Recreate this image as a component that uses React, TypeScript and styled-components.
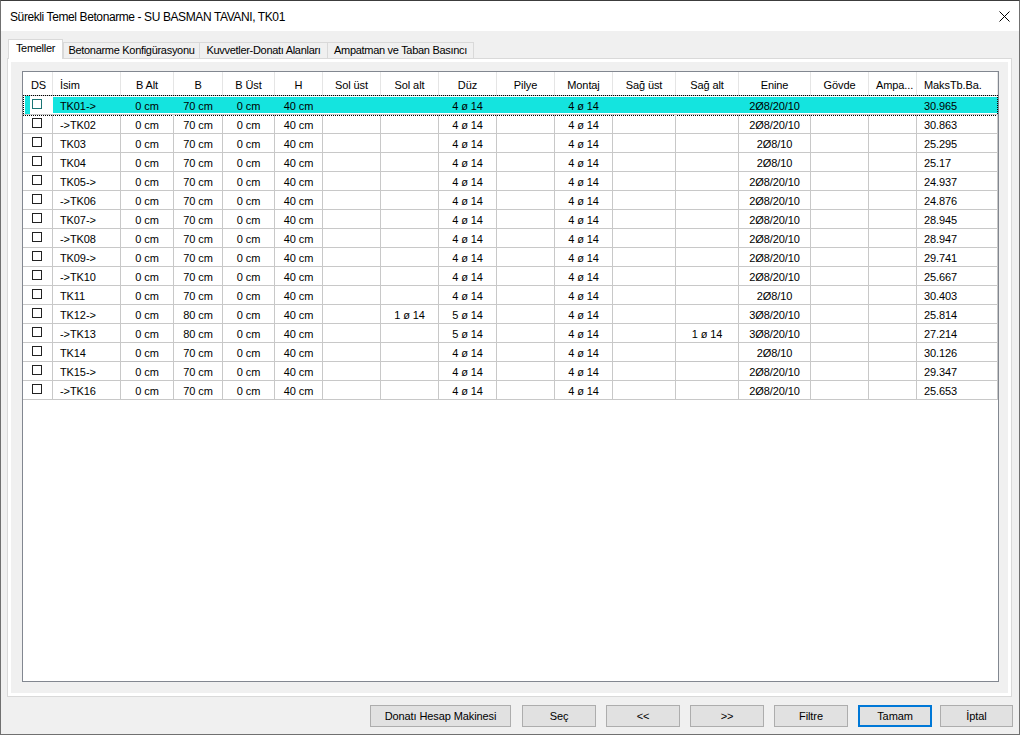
import React from 'react';
import styled, { createGlobalStyle, css } from 'styled-components';

const GlobalStyle = createGlobalStyle`
  html, body { margin: 0; padding: 0; background: #fff; }
  body { font-family: "Liberation Sans", Arial, sans-serif; font-size: 11px; color: #000; }
  * { box-sizing: border-box; }
`;

const Window = styled.div`
  width: 1020px;
  height: 735px;
  border: 1px solid #707070;
  border-top-color: #3c3c3c;
  display: flex;
  flex-direction: column;
  background: #f0f0f0;
  overflow: hidden;
`;

const TitleBar = styled.div`
  height: 30px;
  flex: none;
  background: #fff;
  display: flex;
  align-items: center;
  justify-content: space-between;
  padding: 0 9px 0 9px;
`;

const TitleText = styled.div`
  font-family: "Liberation Sans", Arial, sans-serif;
  font-size: 12px;
  letter-spacing: -0.4px;
  padding-top: 1px;
`;

const Client = styled.div`
  flex: 1;
  display: flex;
  flex-direction: column;
  padding: 8px 7px 0 6px;
`;

const TabStrip = styled.div`
  display: flex;
  align-items: flex-end;
  height: 19px;
  padding-left: 1px;
`;

const Tab = styled.div<{ $active?: boolean; $w: number; $join?: boolean }>`
  width: ${(p) => p.$w}px;
  text-align: center;
  white-space: nowrap;
  letter-spacing: -0.3px;
  border: 1px solid #d9d9d9;
  border-bottom: none;
  ${(p) =>
    p.$active
      ? css`
          height: 20px;
          margin-bottom: -1px;
          background: #fff;
          position: relative;
          z-index: 1;
          line-height: 16px;
        `
      : css`
          height: 16px;
          background: #f0f0f0;
          line-height: 14px;
          margin-left: ${p.$join ? -1 : 0}px;
        `}
`;

const Panel = styled.div`
  height: 639px;
  flex: none;
  border: 1px solid #d9d9d9;
  background: #f0f0f0;
  box-shadow: inset 0 0 0 3px #fff;
  padding: 12px 12px 14px 14px;
`;

const ListBox = styled.div`
  height: 100%;
  border: 1px solid #828790;
  background: #fff;
  overflow: hidden;
`;

const HeaderRow = styled.div`
  display: flex;
  height: 23px;
`;

const HeaderCell = styled.div<{ $w: number; $align: string; $pad: number }>`
  width: ${(p) => p.$w}px;
  flex: none;
  height: 23px;
  border-right: 1px solid #e5e5e5;
  text-align: ${(p) => p.$align};
  padding-left: ${(p) => (p.$align === 'left' ? p.$pad : 0)}px;
  line-height: 23px;
  padding-top: 2px;
  white-space: nowrap;
  overflow: hidden;
  letter-spacing: -0.1px;
`;

const Body = styled.div`
  border-top: 1px solid #c8c8c8;
`;

const Row = styled.div<{ $selected?: boolean }>`
  display: flex;
  height: 19px;
  border-bottom: 1px solid #c8c8c8;
  position: relative;
  ${(p) =>
    p.$selected &&
    css`
      &::after {
        content: '';
        position: absolute;
        left: 0;
        right: 0;
        top: -1px;
        height: 19px;
        border: 1px dotted #000;
        pointer-events: none;
      }
    `}
`;

const CYAN = '#14e4df';

const Cell = styled.div<{ $w: number; $align: string; $selected?: boolean }>`
  width: ${(p) => p.$w}px;
  flex: none;
  height: 18px;
  border-right: 1px solid #c8c8c8;
  text-align: ${(p) => p.$align};
  padding-left: ${(p) => (p.$align === 'left' ? 7 : 0)}px;
  padding-top: 1px;
  line-height: 18px;
  white-space: nowrap;
  overflow: hidden;
  letter-spacing: -0.1px;
  ${(p) =>
    p.$selected &&
    css`
      border-right-color: transparent;
      background: linear-gradient(to bottom, #fff 1px, ${CYAN} 1px, ${CYAN} 17px, #fff 17px);
    `}
`;

const CheckCell = styled.div<{ $w: number; $selected?: boolean }>`
  width: ${(p) => p.$w}px;
  flex: none;
  height: 18px;
  border-right: 1px solid #c8c8c8;
  padding: 3px 0 0 9px;
  ${(p) =>
    p.$selected &&
    css`
      border-right-color: transparent;
      background: linear-gradient(to right, #fff 2px, ${CYAN} 2px, ${CYAN} 7px, #fff 7px);
    `}
`;

const CheckBox = styled.span<{ $focus?: boolean }>`
  display: block;
  width: 10px;
  height: 10px;
  border: 1px solid ${(p) => (p.$focus ? '#1b7474' : '#222')};
  background: #fff;
`;

const ButtonRow = styled.div`
  display: flex;
  justify-content: flex-end;
  margin-top: 8px;
  margin-right: -1px;
`;

const Button = styled.div<{ $w: number; $gap: number; $default?: boolean }>`
  width: ${(p) => p.$w}px;
  height: 22px;
  margin-left: ${(p) => p.$gap}px;
  background: #e1e1e1;
  border: 1px solid #adadad;
  text-align: center;
  line-height: 20px;
  white-space: nowrap;
  letter-spacing: -0.1px;
  ${(p) =>
    p.$default &&
    css`
      border: 2px solid #0078d7;
      line-height: 18px;
    `}
`;

type Col = { label: string; w: number; align: 'left' | 'center' };

const columns: Col[] = [
  { label: 'DS', w: 30, align: 'left' },
  { label: 'İsim', w: 68, align: 'left' },
  { label: 'B Alt', w: 53, align: 'center' },
  { label: 'B', w: 49, align: 'center' },
  { label: 'B Üst', w: 52, align: 'center' },
  { label: 'H', w: 48, align: 'center' },
  { label: 'Sol üst', w: 58, align: 'center' },
  { label: 'Sol alt', w: 58, align: 'center' },
  { label: 'Düz', w: 58, align: 'center' },
  { label: 'Pilye', w: 58, align: 'center' },
  { label: 'Montaj', w: 58, align: 'center' },
  { label: 'Sağ üst', w: 63, align: 'center' },
  { label: 'Sağ alt', w: 63, align: 'center' },
  { label: 'Enine', w: 72, align: 'center' },
  { label: 'Gövde', w: 58, align: 'center' },
  { label: 'Ampa...', w: 48, align: 'left' },
  { label: 'MaksTb.Ba.', w: 81, align: 'left' },
];

const d = '4 ø 14';
const mk = (
  name: string,
  b: string,
  enine: string,
  maks: string,
  opts: { solAlt?: string; duz?: string; sagAlt?: string } = {}
) => [
  name,
  '0 cm',
  b,
  '0 cm',
  '40 cm',
  '',
  opts.solAlt || '',
  opts.duz || d,
  '',
  d,
  '',
  opts.sagAlt || '',
  enine,
  '',
  '',
  maks,
];

const rows: string[][] = [
  mk('TK01->', '70 cm', '2Ø8/20/10', '30.965'),
  mk('->TK02', '70 cm', '2Ø8/20/10', '30.863'),
  mk('TK03', '70 cm', '2Ø8/10', '25.295'),
  mk('TK04', '70 cm', '2Ø8/10', '25.17'),
  mk('TK05->', '70 cm', '2Ø8/20/10', '24.937'),
  mk('->TK06', '70 cm', '2Ø8/20/10', '24.876'),
  mk('TK07->', '70 cm', '2Ø8/20/10', '28.945'),
  mk('->TK08', '70 cm', '2Ø8/20/10', '28.947'),
  mk('TK09->', '70 cm', '2Ø8/20/10', '29.741'),
  mk('->TK10', '70 cm', '2Ø8/20/10', '25.667'),
  mk('TK11', '70 cm', '2Ø8/10', '30.403'),
  mk('TK12->', '80 cm', '3Ø8/20/10', '25.814', { solAlt: '1 ø 14', duz: '5 ø 14' }),
  mk('->TK13', '80 cm', '3Ø8/20/10', '27.214', { duz: '5 ø 14', sagAlt: '1 ø 14' }),
  mk('TK14', '70 cm', '2Ø8/10', '30.126'),
  mk('TK15->', '70 cm', '2Ø8/20/10', '29.347'),
  mk('->TK16', '70 cm', '2Ø8/20/10', '25.653'),
];

const tabs = [
  { label: 'Temeller', w: 55, active: true },
  { label: 'Betonarme Konfigürasyonu', w: 137 },
  { label: 'Kuvvetler-Donatı Alanları', w: 129, join: true },
  { label: 'Ampatman ve Taban Basıncı', w: 147, join: true },
];

const buttons = [
  { label: 'Donatı Hesap Makinesi', w: 141, gap: 0 },
  { label: 'Seç', w: 74, gap: 11 },
  { label: '<<', w: 74, gap: 10 },
  { label: '>>', w: 74, gap: 10 },
  { label: 'Filtre', w: 74, gap: 10 },
  { label: 'Tamam', w: 74, gap: 10, def: true },
  { label: 'İptal', w: 73, gap: 8 },
];

const CloseIcon = () => (
  <svg width="11" height="11" viewBox="0 0 11 11" style={{ display: 'block' }}>
    <path d="M0.5 0.5 L10.5 10.5 M10.5 0.5 L0.5 10.5" stroke="#000" strokeWidth="1" fill="none" />
  </svg>
);

export default function App() {
  return (
    <>
      <GlobalStyle />
      <Window>
        <TitleBar>
          <TitleText>Sürekli Temel Betonarme - SU BASMAN TAVANI, TK01</TitleText>
          <CloseIcon />
        </TitleBar>
        <Client>
          <TabStrip>
            {tabs.map((t) => (
              <Tab key={t.label} $w={t.w} $active={t.active} $join={t.join}>
                {t.label}
              </Tab>
            ))}
          </TabStrip>
          <Panel>
            <ListBox>
              <HeaderRow>
                {columns.map((c, i) => (
                  <HeaderCell key={c.label} $w={c.w} $align={c.align} $pad={i === 0 ? 8 : 7}>
                    {c.label}
                  </HeaderCell>
                ))}
              </HeaderRow>
              <Body>
                {rows.map((r, ri) => {
                  const sel = ri === 0;
                  return (
                    <Row key={r[0]} $selected={sel}>
                      <CheckCell $w={columns[0].w} $selected={sel}>
                        <CheckBox $focus={sel} />
                      </CheckCell>
                      {r.map((v, ci) => {
                        const col = columns[ci + 1];
                        return (
                          <Cell key={ci} $w={col.w} $align={col.align} $selected={sel}>
                            {v}
                          </Cell>
                        );
                      })}
                    </Row>
                  );
                })}
              </Body>
            </ListBox>
          </Panel>
          <ButtonRow>
            {buttons.map((b) => (
              <Button key={b.label} $w={b.w} $gap={b.gap} $default={b.def}>
                {b.label}
              </Button>
            ))}
          </ButtonRow>
        </Client>
      </Window>
    </>
  );
}
